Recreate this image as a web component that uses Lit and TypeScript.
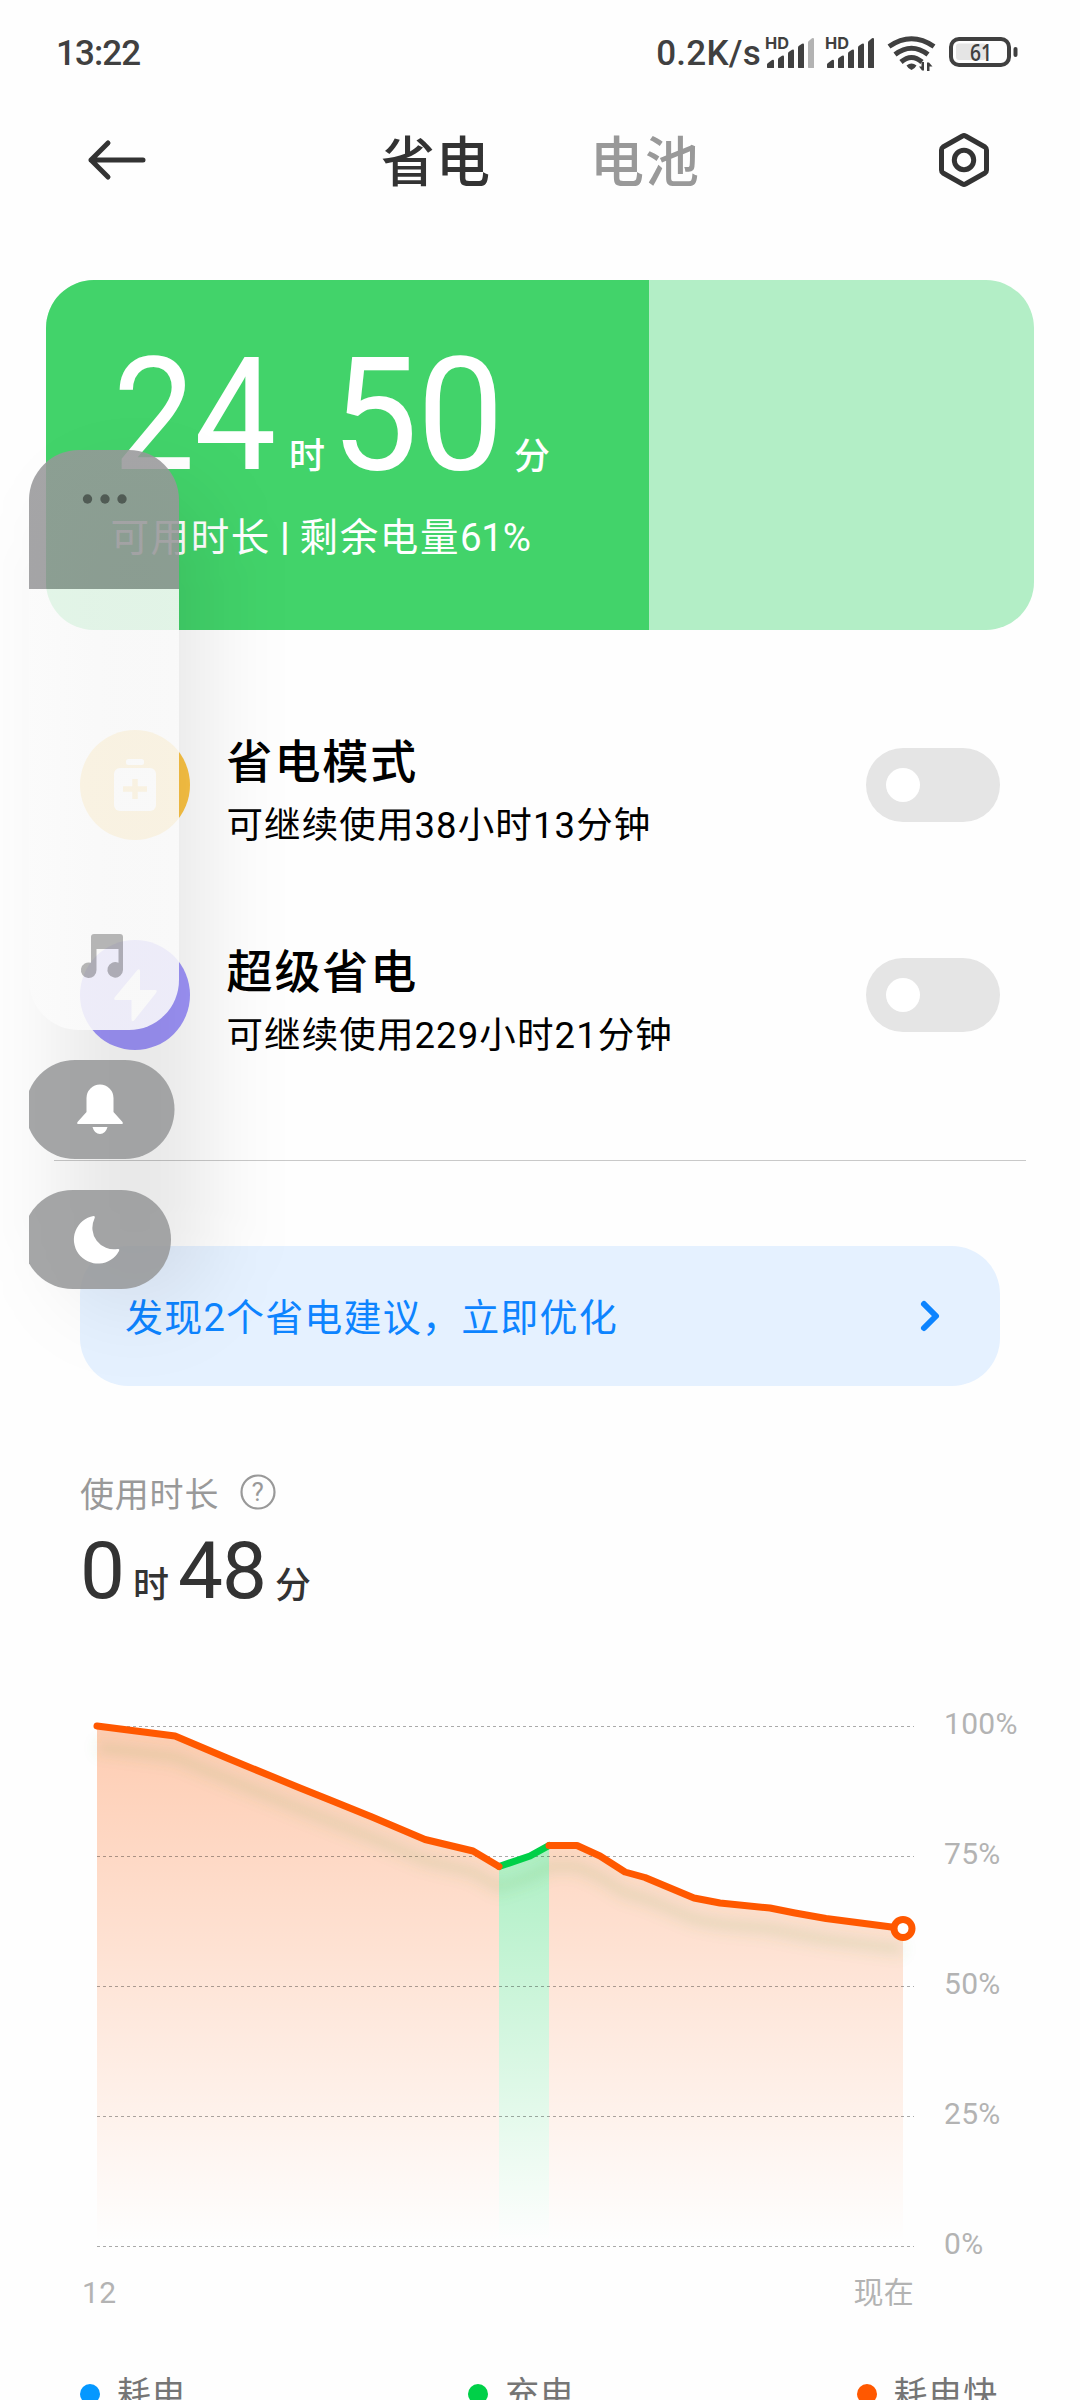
import { LitElement, html, svg, css } from "lit";
import { customElement, property } from "lit/decorators.js";

const LINE: [number, number][] = [
  [97, 1726], [175, 1736], [227, 1758], [300, 1788], [330, 1800], [372, 1817], [425, 1839.5], [473, 1851], [499, 1866.5],
  [530, 1856], [549, 1845.5], [577, 1845.5], [600, 1856], [625, 1872], [645, 1877.5], [694, 1898], [720, 1903],
  [770, 1908], [795, 1913], [826, 1918.5], [903, 1928.5],
];
const CHARGE_START = 8;
const CHARGE_END = 10;
const OX = 80;
const OY = 1706;
const pts = (from: number, to: number) =>
  LINE.slice(from, to + 1).map(([x, y]) => `${x - OX},${y - OY}`).join(" ");
const area = (from: number, to: number) =>
  `${LINE[from][0] - OX},540 ${pts(from, to)} ${LINE[to][0] - OX},540`;

@customElement("status-bar")
class StatusBar extends LitElement {
  static styles = css`
    :host { display: flex; align-items: center; height: 108px; padding: 0 62px 0 56px; box-sizing: border-box; color: #404040;
      font: 500 35px/1 Roboto, "Noto Sans CJK SC", sans-serif; }
    .time { flex: 1; letter-spacing: -0.9px; padding-bottom: 2px; }
    .speed { letter-spacing: 0.25px; margin-right: 3px; padding-bottom: 2px; }
    svg { display: block; overflow: visible; }
    .hd { font: 700 16.5px/1 Inter, sans-serif; fill: #404040; }
    .pct { font: 600 23px/1 "Open Sans", Roboto, sans-serif; fill: #404040; }
  `;
  signal(x: number, last: string) {
    return svg`<text class="hd" x=${x - 2} y="12.5" textLength="24" lengthAdjust="spacingAndGlyphs">HD</text>
      <g fill="#404040"><path d="M${x} 31.5v-3q0-1 1-1.5l4-3q2-.8 2 1v6.5q0 .5-.5.5h-6z"/>
      <path d="M${x + 11} 31.5v-8q0-1 1-1.7l3-2q2-.8 2 1v10.7q0 .5-.5.5h-5z"/>
      <path d="M${x + 21} 31.5v-14q0-1 1-1.7l3-2q2-.8 2 1v16.7q0 .5-.5.5h-5z"/>
      <path d="M${x + 31} 31.5v-20q0-1 1-1.7l3-2q2-.8 2 1v22.7q0 .5-.5.5h-5z"/>
      <path fill=${last} d="M${x + 41} 31.5v-25q0-1 1-1.7l3-2.500q2-.8 2 1v28.200q0 .5-.5.5h-5z"/></g>`;
  }
  render() {
    return html`<span class="time">13:22</span><span class="speed">0.2K/s</span>
      <svg width="254" height="36" viewBox="0 0 254 36">
        ${this.signal(3, "#b3b3b3")}${this.signal(63, "#404040")}
        <g fill="none" stroke="#404040" stroke-width="5">
          <path d="M125 10.500q22.500-15.500 45 0"/><path d="M131 18.500q16.500-12.500 33 0"/><path d="M137 26q10.500-9 21 0"/>
        </g>
        <path fill="#404040" d="M142.500 29.500q5-4 10 0q-1.500 3-5 4.500q-3.500-1.500-5-4.500z"/>
        <path fill="#404040" d="M160 26v8.500h-2l-3-4h2.500v-4.500zM163 35v-8.500h2l3.500 4H165.500v4.500z"/>
        <rect x="187" y="3" width="58" height="26" rx="8" fill="none" stroke="#404040" stroke-width="4"/>
        <rect x="192" y="7.500" width="30" height="16.500" rx="3" fill="#e5e5e5"/>
        <text class="pct" x="206" y="24.500" textLength="22" lengthAdjust="spacingAndGlyphs">61</text>
        <rect x="249.500" y="11" width="4" height="10" rx="2" fill="#404040"/>
      </svg>`;
  }
}

@customElement("mode-row")
class ModeRow extends LitElement {
  @property() icon = "";
  @property() name = "";
  @property() note = "";
  static styles = css`
    :host { display: flex; align-items: center; height: 210px; padding: 0 80px; }
    .disc { width: 110px; height: 110px; border-radius: 50%; }
    .save { background: #fcc444; }
    .ultra { background: #9f95fb; }
    .text { flex: 1; margin-left: 36.5px; padding-top: 12px; display: flex; flex-direction: column; }
    .name { font-size: 46px; line-height: 56px; font-weight: 500; letter-spacing: 1.9px; color: #000; }
    .note { font-size: 36.5px; line-height: 46px; letter-spacing: 1.1px; color: #000; margin-top: 13px; }
    .switch { width: 134px; height: 74px; border-radius: 37px; background: #e5e5e5; padding: 20px; box-sizing: border-box; }
    .knob { width: 34px; height: 34px; border-radius: 50%; background: #fff; }
  `;
  render() {
    return html`<svg class="disc ${this.icon}" viewBox="0 0 110 110" fill="#fff">
      ${this.icon === "save"
        ? svg`<rect x="46" y="29" width="18" height="6" rx="2.500"/><rect x="34" y="38" width="42" height="43" rx="6"/>
            <path d="M43 59h24M55 49v20" stroke="#fcc444" stroke-width="5.500"/>`
        : svg`<path d="M57 30.500q3-3 3 1V50h15q3 0 1 3L54.500 80q-3 3-3-1V60H36q-3 0-1-3z"/>`}
      </svg>
      <div class="text"><span class="name">${this.name}</span><span class="note">${this.note}</span></div>
      <div class="switch"><div class="knob"></div></div>`;
  }
}

@customElement("usage-chart")
class UsageChart extends LitElement {
  static styles = css`
    :host { display: block; padding-left: 80px; }
    .plot { display: flex; }
    svg { display: block; overflow: visible; }
    .scale { display: flex; flex-direction: column; justify-content: space-between; height: 556px; margin: 0 0 0 24px; }
    span { font-size: 30px; line-height: 36px; color: #b3b3b3; letter-spacing: .3px; }
    .axis { display: flex; justify-content: space-between; width: 834px; margin-top: 9px; padding-left: 2px; box-sizing: border-box; }
  `;
  render() {
    return html`<div class="plot">
      <svg width="840" height="560" viewBox="0 0 840 560">
        <defs>
          <linearGradient id="hot" gradientUnits="userSpaceOnUse" x1="0" y1="20" x2="0" y2="536">
            <stop offset="0" stop-color="#ff5800" stop-opacity=".3"/><stop offset="1" stop-color="#ff5800" stop-opacity="0"/>
          </linearGradient>
          <linearGradient id="cool" gradientUnits="userSpaceOnUse" x1="0" y1="140" x2="0" y2="536">
            <stop offset="0" stop-color="#00d048" stop-opacity=".32"/><stop offset="1" stop-color="#00d048" stop-opacity="0"/>
          </linearGradient>
          <filter id="soft" x="-10%" y="-20%" width="120%" height="160%"><feGaussianBlur stdDeviation="7"/></filter>
        </defs>
        <polygon points=${area(0, CHARGE_START)} fill="url(#hot)"/>
        <polygon points=${area(CHARGE_START, CHARGE_END)} fill="url(#cool)"/>
        <polygon points=${area(CHARGE_END, LINE.length - 1)} fill="url(#hot)"/>
        <g stroke="#000" stroke-opacity=".33" stroke-width="1" stroke-dasharray="3 3">
          ${[0, 1, 2, 3, 4].map((i) => svg`<line x1="17" x2="834" y1=${20.5 + i * 130} y2=${20.5 + i * 130}/>`)}
        </g>
        <polyline points=${pts(0, LINE.length - 1)} transform="translate(0 21)" fill="none" stroke="#5aa040" stroke-opacity=".14" stroke-width="12" filter="url(#soft)"/>
        <g fill="none" stroke="#ff5800" stroke-width="7" stroke-linecap="round" stroke-linejoin="round">
          <polyline points=${pts(CHARGE_START, CHARGE_END)} stroke="#00d048"/>
          <polyline points=${pts(0, CHARGE_START)}/>
          <polyline points=${pts(CHARGE_END, LINE.length - 1)}/>
        </g>
        <circle cx="823" cy="222.500" r="9" fill="#fff" stroke="#ff5800" stroke-width="7"/>
      </svg>
      <div class="scale"><span>100%</span><span>75%</span><span>50%</span><span>25%</span><span>0%</span></div>
    </div>
    <div class="axis"><span>12</span><span>现在</span></div>`;
  }
}

@customElement("volume-panel")
class VolumePanel extends LitElement {
  static styles = css`
    :host { display: block; position: absolute; left: 29px; top: 450px; width: 150px; height: 840px; }
    .shade { position: absolute; left: 36px; top: 40px; width: 140px; height: 815px; border-radius: 70px; background: rgba(0,0,0,.09); filter: blur(43px); }
    .column { position: relative; display: flex; flex-direction: column; overflow: hidden; }
    .slider { height: 580px; border-radius: 50px;
      background: linear-gradient(rgba(151,151,153,.868) 139px, rgba(251,251,251,.868) 139px); }
    .pill { height: 99px; }
    .bell { margin-top: 30px; }
    .moon { margin-top: 31px; }
    svg { display: block; }
  `;
  render() {
    return html`<div class="shade"></div>
      <div class="column">
        <svg class="slider" width="150" height="580" viewBox="0 0 150 580">
          <g fill="#000" fill-opacity=".42"><circle cx="58.500" cy="49" r="4.700"/><circle cx="76" cy="49" r="4.700"/><circle cx="93" cy="49" r="4.700"/></g>
          <path fill="#000" fill-opacity=".27" d="M62 487q0-3 3-3h26q3 0 3 3v33a7.800 7.800 0 1 1-4.500-7.200V499H67.500v21a7.800 7.800 0 1 1-5.500-7.200z"/>
        </svg>
        <svg class="pill bell" width="150" height="99" viewBox="0 0 150 99">
          <rect x="-3.500" width="149" height="99" rx="49.500" fill="#97989a" fill-opacity=".868"/>
          <path fill="#fff" d="M57.500 38a13.500 13.500 0 0 1 27 0v14l9 10q1 2-1 2h-43q-2 0-1-2l9-10zM63.500 67h15q-2 7-7.500 7t-7.500-7z"/>
        </svg>
        <svg class="pill moon" width="150" height="99" viewBox="0 0 150 99">
          <rect x="-6" width="148" height="99" rx="49.500" fill="#97989a" fill-opacity=".868"/>
          <path fill="#fff" d="M64.500 26q2 0 1 2.500a21.500 21.500 0 0 0 23 30.500q2.500-.5 1.500 2a24 24 0 1 1-25.500-35z"/>
        </svg>
      </div>`;
  }
}

@customElement("app-root")
class AppRoot extends LitElement {
  static styles = css`
    :host { display: block; position: relative; width: 1080px; height: 2400px; overflow: hidden; background: #fefefe;
      font-family: Roboto, "Noto Sans CJK SC", sans-serif; color: #333; }
    svg { display: block; }
    .bar { display: flex; align-items: center; height: 104px; padding: 0 91px 0 87px; }
    .tabs { flex: 1; display: flex; justify-content: center; gap: 99px; font-size: 54px; line-height: 64px; font-weight: 500; letter-spacing: 1px;
      padding: 7px 5px 0 0; }
    .off { color: #999; }
    .battery { display: flex; margin: 68px 46px 0; height: 350px; border-radius: 48px; overflow: hidden; background: #b3eec6; }
    .fill { background: #42d36a; color: #fff; box-sizing: border-box; padding: 51px 0 0 67px; white-space: nowrap; }
    .left { display: flex; align-items: baseline; height: 168px; line-height: 168px; }
    .big { display: inline-block; font-size: 158px; transform-origin: 0 50%; letter-spacing: -1px; }
    .hours { width: 176px; transform: scaleX(.925); }
    .mins { width: 183px; transform: scaleX(.98); }
    .unit { font-size: 36px; font-weight: 500; }
    .gap { margin-right: 6px; }
    .sub { display: flex; align-items: center; font-size: 38.5px; line-height: 50px; margin: 13px 0 0 -2.5px; letter-spacing: 1.6px; }
    .sep { font-weight: 700; margin: 0 10px 2px 9px; letter-spacing: 0; }
    .num { letter-spacing: -.3px; }
    .modes { padding-top: 50px; }
    .line { height: 1px; margin: 60px 54px 0; background: #c9c9c9; }
    .tip { display: flex; align-items: center; justify-content: space-between; height: 140px; box-sizing: border-box; margin: 85px 80px 0;
      padding: 0 58px 0 45px; border-radius: 48px; background: #e5f1ff; color: #0d84ff; font-size: 38px; letter-spacing: 1.2px; }
    .advice { padding-bottom: 3px; }
    .usage { padding: 0 80px; }
    .label { display: flex; align-items: center; gap: 20px; margin-top: 83px; height: 46px; font-size: 34px; letter-spacing: .8px; color: #999; }
    .q { font: 400 26px/1 Roboto, sans-serif; fill: #999; }
    .total { display: flex; align-items: baseline; height: 90px; line-height: 90px; font-size: 80px; margin-top: 11px; letter-spacing: -1px; }
    .small { font-size: 36px; margin: 0 9px; letter-spacing: 0; font-weight: 500; }
    .chart { margin-top: 90px; }
    .legend { display: flex; justify-content: space-between; padding: 0 82px 0 80px; margin-top: 61px; font-size: 34px; line-height: 44px; letter-spacing: .8px; color: #757575; }
    .item { display: flex; align-items: center; gap: 17px; }
    .dot { width: 20px; height: 20px; border-radius: 50%; }
    .blue { background: #0498ff; } .green { background: #00d048; } .orange { background: #ff5800; }
  `;
  render() {
    return html`<status-bar></status-bar>
      <div class="bar">
        <svg width="60" height="46" viewBox="0 0 60 46" fill="none" stroke="#333" stroke-width="5" stroke-linecap="round" stroke-linejoin="round"><path d="M21 6L4 23l17 17M4 23h52"/></svg>
        <div class="tabs"><span>省电</span><span class="off">电池</span></div>
        <svg width="50" height="56" viewBox="0 0 50 56" fill="none" stroke="#333" stroke-width="5" stroke-linejoin="round"><path d="M23.500 4q1.500-1 3 0l19.500 11q1.500 1 1.500 3v20q0 2-1.500 3l-19.500 11q-1.500 1-3 0L4 41q-1.500-1-1.500-3V18q0-2 1.500-3z"/><circle cx="25" cy="28" r="9.700"/></svg>
      </div>
      <div class="battery"><div class="fill" style="width:61%">
        <div class="left"><span class="big hours">24</span><span class="unit gap">时</span><span class="big mins">50</span><span class="unit">分</span></div>
        <div class="sub"><span>可用时长</span><span class="sep">|</span><span>剩余电量</span><span class="num">61%</span></div>
      </div></div>
      <div class="modes">
        <mode-row icon="save" name="省电模式" note="可继续使用38小时13分钟"></mode-row>
        <mode-row icon="ultra" name="超级省电" note="可继续使用229小时21分钟"></mode-row>
      </div>
      <div class="line"></div>
      <div class="tip"><span class="advice">发现2个省电建议，立即优化</span>
        <svg width="24" height="36" viewBox="0 0 24 36" fill="none" stroke="#0d84ff" stroke-width="6" stroke-linecap="round" stroke-linejoin="round"><path d="M6 6l12 12L6 30"/></svg>
      </div>
      <div class="usage">
        <div class="label"><span>使用时长</span>
          <svg width="38" height="38" viewBox="0 0 38 38"><circle cx="19" cy="19" r="16.500" fill="none" stroke="#999" stroke-width="2.200"/><text class="q" x="19" y="28" text-anchor="middle">?</text></svg>
        </div>
        <div class="total"><span>0</span><span class="small">时</span><span>48</span><span class="small">分</span></div>
      </div>
      <usage-chart class="chart"></usage-chart>
      <div class="legend">
        <span class="item"><i class="dot blue"></i>耗电</span><span class="item"><i class="dot green"></i>充电</span><span class="item"><i class="dot orange"></i>耗电快</span>
      </div>
      <volume-panel></volume-panel>`;
  }
}
